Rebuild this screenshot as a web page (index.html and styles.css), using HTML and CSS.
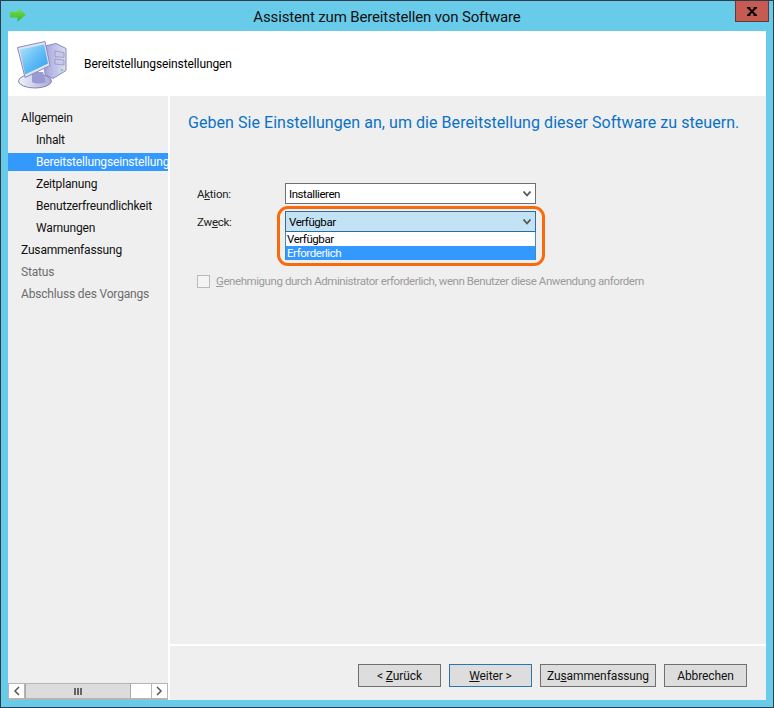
FILE: index.html
```html
<!DOCTYPE html>
<html lang="de">
<head>
<meta charset="utf-8">
<title>Assistent zum Bereitstellen von Software</title>
<link rel="stylesheet" href="styles.css">
</head>
<body>
<div class="window">
  <div class="titlebar">
    <svg class="app-icon" width="16" height="14" viewBox="0 0 16 14">
      <defs><linearGradient id="arrow" x1="0" y1="0" x2="0" y2="1"><stop offset="0" stop-color="#7fe04a"/><stop offset="1" stop-color="#2fb82a"/></linearGradient></defs>
      <path d="M0 3.800h7.500V0l8.500 6.800-8.500 7V9.500H0z" fill="url(#arrow)"/>
    </svg>
    <div class="title">Assistent zum Bereitstellen von Software</div>
    <div class="close"><svg width="10" height="9" viewBox="0 0 10 9"><path d="M1 .5l8 8M9 .5l-8 8M0 .5h3.500M6.500 .5H10M0 8.500h3.500M6.500 8.500H10" stroke="#000" stroke-width="2" fill="none"/></svg></div>
  </div>
  <div class="client">
    <header class="head">
      <svg class="computer" width="52" height="50" viewBox="0 0 52 50">
        <defs>
          <linearGradient id="screen" x1="0" y1="0" x2="1" y2="1"><stop offset="0" stop-color="#b5e5fa"/><stop offset=".5" stop-color="#62bdf6"/><stop offset="1" stop-color="#2e9df2"/></linearGradient>
          <linearGradient id="body" x1="0" y1="0" x2="1" y2="0"><stop offset="0" stop-color="#9d9dd8"/><stop offset=".4" stop-color="#b9b9e6"/><stop offset="1" stop-color="#dcdcf2"/></linearGradient>
          <linearGradient id="foot" x1="0" y1="0" x2="1" y2="0"><stop offset="0" stop-color="#f2f2fa"/><stop offset="1" stop-color="#a9a9d6"/></linearGradient>
        </defs>
        <path d="M26 7.500l13-3 10 5v22l-13 8-8-4z" fill="url(#body)" stroke="#8a8abc"/>
        <path d="M38 12l9 1.500v5l-9-1zM38 20l9 1v5l-9-1z" fill="#c7c7e8" stroke="#8f8fc0" stroke-width=".7"/>
        <circle cx="45" cy="31" r="1" fill="#5fd35f"/>
        <ellipse cx="18" cy="42" rx="16.500" ry="7" fill="url(#foot)" stroke="#8383b4"/>
        <path d="M15 33h11l3 10c-5 2-10 2-14 0z" fill="#9a9ad2"/>
        <path d="M.5 8.500L28 2.500l5 24-25 12z" fill="#dfe3f6" stroke="#8a8ab8"/>
        <path d="M2.800 10.500L27 5.500l4 19-23 11z" fill="url(#screen)"/>
      </svg>
      <div class="head-text">Bereitstellungseinstellungen</div>
    </header>
    <div class="columns">
      <aside class="side">
        <nav class="nav">
          <div class="nav-item">Allgemein</div>
          <div class="nav-item sub">Inhalt</div>
          <div class="nav-item sub selected">Bereitstellungseinstellungen</div>
          <div class="nav-item sub">Zeitplanung</div>
          <div class="nav-item sub">Benutzerfreundlichkeit</div>
          <div class="nav-item sub">Warnungen</div>
          <div class="nav-item">Zusammenfassung</div>
          <div class="nav-item muted">Status</div>
          <div class="nav-item muted">Abschluss des Vorgangs</div>
        </nav>
        <div class="hscroll">
          <div class="sb-btn"><svg width="7" height="10" viewBox="0 0 7 10"><path d="M6 1L2 5l4 4" fill="none" stroke="#555" stroke-width="1.500"/></svg></div>
          <div class="sb-thumb"><svg width="8" height="7" viewBox="0 0 8 7"><path d="M0 0h2v7H0zM3 0h2v7H3zM6 0h2v7H6z" fill="#666"/></svg></div>
          <div class="sb-track"></div>
          <div class="sb-btn"><svg width="7" height="10" viewBox="0 0 7 10"><path d="M1 1l4 4-4 4" fill="none" stroke="#555" stroke-width="1.500"/></svg></div>
        </div>
      </aside>
      <main class="main">
        <div class="content">
          <h1 class="heading">Geben Sie Einstellungen an, um die Bereitstellung dieser Software zu steuern.</h1>
          <div class="form-row">
            <div class="label">A<u>k</u>tion:</div>
            <div class="combo"><span>Installieren</span><svg class="chev" width="8" height="6" viewBox="0 0 8 6"><path d="M.5 .5L4 4.500 7.500 .5" fill="none" stroke="#555" stroke-width="1.800"/></svg></div>
          </div>
          <div class="form-row second">
            <div class="label">Zw<u>e</u>ck:</div>
            <div class="combo-wrap">
              <div class="combo open"><span>Verfügbar</span><svg class="chev" width="8" height="6" viewBox="0 0 8 6"><path d="M.5 .5L4 4.500 7.500 .5" fill="none" stroke="#555" stroke-width="1.800"/></svg></div>
              <div class="list">
                <div class="opt">Verfügbar</div>
                <div class="opt active">Erforderlich</div>
              </div>
              <div class="callout"></div>
            </div>
          </div>
          <div class="check-row">
            <span class="check"></span>
            <span class="check-label"><u>G</u>enehmigung durch Administrator erforderlich, wenn Benutzer diese Anwendung anfordern</span>
          </div>
        </div>
        <footer class="foot">
          <button class="btn back">&lt; <u>Z</u>urück</button>
          <button class="btn next"><u>W</u>eiter &gt;</button>
          <button class="btn sum">Zu<u>s</u>ammenfassung</button>
          <button class="btn cancel">Abbrechen</button>
        </footer>
      </main>
    </div>
  </div>
</div>
</body>
</html>
```
FILE: styles.css
```css
* { box-sizing: border-box; }
html, body { margin: 0; padding: 0; }
body { width: 774px; height: 708px; overflow: hidden; font-family: Roboto, "Open Sans", sans-serif; font-size: 12px; letter-spacing: -0.1px; color: #000; }
.window { width: 774px; height: 708px; background: #69cbea; border: 1px solid #2f3b46; display: flex; flex-direction: column; }
.titlebar { height: 30px; display: flex; align-items: flex-start; position: relative; }
.app-icon { margin: 7px 0 0 9px; }
.title { position: absolute; left: 0; right: 0; top: 6px; text-align: center; font-size: 15px; letter-spacing: -0.15px; line-height: 20px; color: #111; }
.close { position: absolute; right: 4px; top: 0; width: 34px; height: 21px; background: #c75b52; border: 1px solid #5c3a3d; border-top: 0; display: flex; align-items: center; justify-content: center; }
.client { margin: 0 7px 7px; flex: 1; display: flex; flex-direction: column; background: #fff; min-height: 0; }
.head { height: 65px; display: flex; align-items: center; background: #fff; }
.computer { margin: 0 0 0 9px; }
.head-text { margin-left: 15px; }
.columns { flex: 1; display: flex; min-height: 0; }
.side { width: 160px; background: #efefef; display: flex; flex-direction: column; }
.nav { flex: 1; padding-top: 11px; overflow: hidden; }
.nav-item { height: 22px; line-height: 22px; padding-left: 13px; white-space: nowrap; overflow: hidden; color: #111; letter-spacing: -0.17px; }
.nav-item.sub { padding-left: 28px; }
.nav-item.selected { background: linear-gradient(#fff0 0 2px, #3399ff 2px 20px, #fff0 20px); color: #fff; }
.nav-item.muted { color: #6d6d6d; }
.hscroll { height: 17px; display: flex; background: #fff; border-top: 1px solid #b5b5b5; border-bottom: 2px solid #b5b5b5; }
.sb-btn { width: 17px; background: #fff; border: 1px solid #b5b5b5; border-width: 0 1px; display: flex; align-items: center; justify-content: center; }
.sb-thumb { width: 106px; background: #dcdcdc; border: 1px solid #a8a8a8; border-width: 0 1px; display: flex; align-items: center; justify-content: center; }
.sb-track { flex: 1; }
.main { flex: 1; margin-left: 2px; background: #efefef; display: flex; flex-direction: column; min-width: 0; }
.content { flex: 1; padding: 16px 18px 0; border-bottom: 2px solid #fff; }
.heading { margin: 0; font-size: 16px; font-weight: 400; letter-spacing: 0.05px; line-height: 22px; color: #0a72c6; white-space: nowrap; }
.form-row { display: flex; margin-top: 49px; padding-left: 9px; font-size: 11.5px; letter-spacing: -0.43px; }
.form-row.second { margin-top: 7px; height: 63px; }
.label { width: 88px; padding-top: 3px; line-height: 16px; color: #222; letter-spacing: -0.25px; }
.combo-wrap { position: relative; }
.combo { width: 251px; height: 21px; border: 1px solid #707070; background: #fff; display: flex; align-items: center; justify-content: space-between; padding: 1px 4px 0 3px; }
.combo.open { background: #c3e2f4; border-color: #2b6e9e; }
.list { width: 251px; border: 1px solid #3a8ec4; border-top: 0; border-bottom: 0; background: #fff; }
.opt { height: 14px; line-height: 15px; padding-left: 1px; }
.opt.active { background: #3399ff; color: #fff; }
.callout { position: absolute; left: -8px; top: -5px; width: 268px; height: 60px; border: 3px solid #f96a0a; border-radius: 11px; }
.check-row { display: flex; align-items: center; color: #9b9b9b; padding-left: 9px; font-size: 11.5px; letter-spacing: -0.43px; }
.check { width: 13px; height: 13px; border: 1px solid #b9b9b9; background: #f4f4f4; margin-right: 6px; }
.foot { height: 54px; display: flex; justify-content: flex-end; gap: 8px; padding: 18px 19px 0 0; }
.btn { height: 23px; padding: 0; border: 1px solid #707070; background: #dddddd; font: inherit; letter-spacing: inherit; color: #111; }
.back { width: 83px; }
.next { width: 83px; border-color: #2b76ad; }
.sum { width: 116px; }
.cancel { width: 83px; }
```
